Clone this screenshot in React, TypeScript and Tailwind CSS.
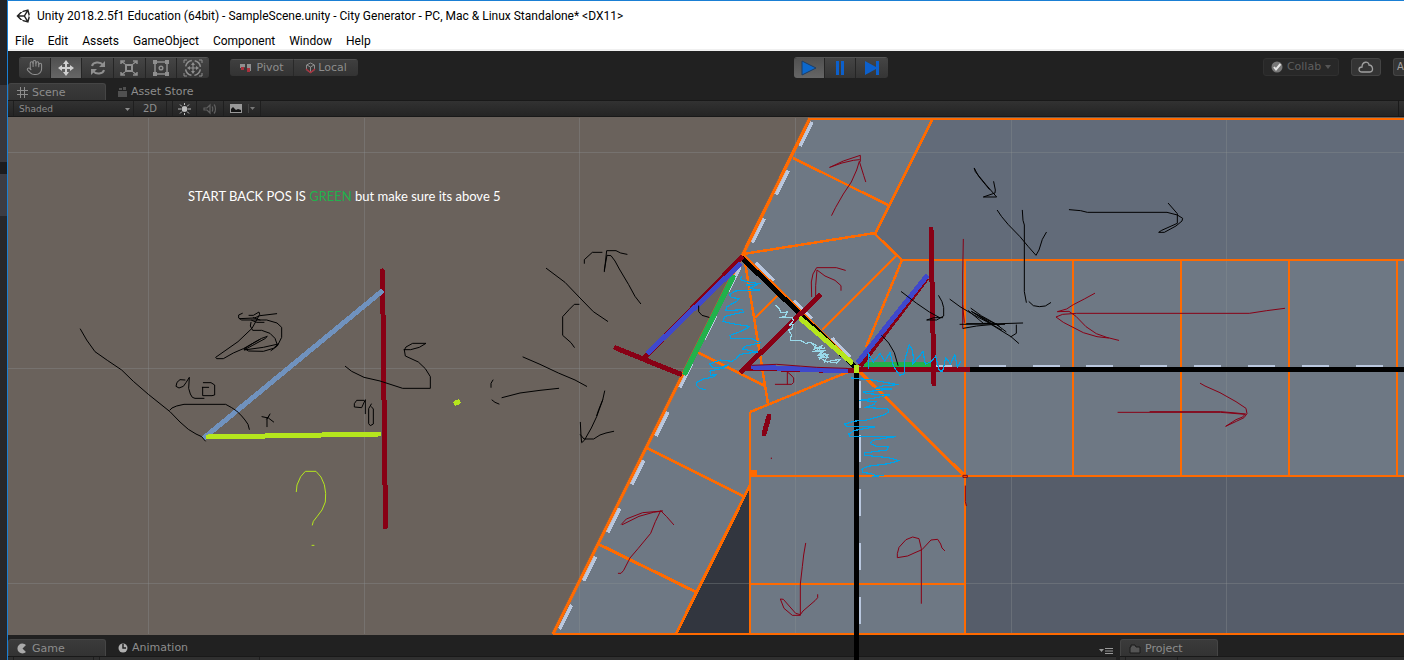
import type { ReactNode } from "react";
import { FaUnity } from "react-icons/fa";
import { Hand } from "lucide-react";

const RED = "#880015";
const CYAN = "#00a2e8";
const LIME = "#b5e61d";
const INDIGO = "#3f48cc";
const GREEN = "#22b14c";
const ORANGE = "#ff6a00";

const menus = ["File", "Edit", "Assets", "GameObject", "Component", "Window", "Help"];

/* Freehand strokes are written on a grid three times finer than the scene. */
function Ink({ x, y, color = "#000", width = 1, d }: { x: number; y: number; color?: string; width?: number; d: string }) {
  return (
    <path
      d={d}
      transform={`translate(${x} ${y}) scale(0.33333)`}
      stroke={color}
      strokeWidth={width * 3}
      fill="none"
      strokeLinecap="round"
      strokeLinejoin="round"
    />
  );
}

function Thick({ d, color }: { d: string; color: string }) {
  return <path d={d} stroke={color} strokeWidth={5} fill="none" strokeLinecap="round" />;
}

function SceneDrawing() {
  const major = [148.5, 364.5, 579.5, 795.5, 1011.5, 1226.5];
  const rows = [152.5, 368.5, 583.5];
  const laneMarks = Array.from({ length: 11 }, (_, k) => [812 - 24.05 * k, 122 + 48.3 * k]);
  return (
    <svg
      className="absolute inset-0 h-full w-full overflow-visible"
      viewBox="8 117 1396 518"
      preserveAspectRatio="xMinYMin slice"
      shapeRendering="crispEdges"
      aria-label="Scene view"
    >
      <rect x="8" y="117" width="1396" height="518" fill="#6a625c" />
      <path d="M810 118 H1404 V634 H553Z" fill="#6e7884" />
      <path d="M933 118 L875 234 L902 261 H1404 V118Z" fill="#626b79" />
      <path d="M965 476 H1404 V634 H965Z" fill="#565d6a" />
      <path d="M750 486 V634 H676Z" fill="#32363f" />
      <g stroke="#8c9193" strokeOpacity="0.35" fill="none">
        {major.map((x) => <path key={x} d={`M${x} 118V634`} />)}
        {rows.map((y) => <path key={y} d={`M8 ${y}H1404`} />)}
      </g>

      <g stroke="#b9c7de" strokeWidth="4" fill="none">
        {laneMarks.map(([x, y]) => <path key={x} d={`M${x} ${y}l-12 24`} />)}
        <path strokeWidth="3" d="M756 263l18 18M794 301l18 18M832 338l18 19" />
        <path strokeWidth="2" d="M925 366h27M979 366h27M1033 366h27M1086 366h27M1140 366h27M1194 366h27M1248 366h27M1302 366h27M1356 366h27" />
        <path strokeWidth="2" d="M860 381v27M860 435v27M860 489v27M860 543v27M860 597v27" />
      </g>

      <path d="M810 118L743 254L553 634" stroke={ORANGE} strokeWidth="4" strokeOpacity="0.35" fill="none" shapeRendering="auto" />
      <g stroke={ORANGE} strokeWidth="2" fill="none">
        <path strokeWidth="3" d="M810 118L743 254L553 634" />
        <path d="M810 119H1404M553 634H1404M902 260H1404" />
        <path d="M933 118L875 234L902 260" strokeWidth="2.500" />
        <path d="M793 158L888 205M743 254L875 233M897 255L822 330M778 295L755 318M902 260L866 347" strokeWidth="2.500" />
        <path d="M743 254L856 366M744 256L768 404M697 352L765 386M750 412L848 372" strokeWidth="2.500" />
        <path d="M647 448L743 496M598 544L696 592M860 372L965 476M750 485L676 634" strokeWidth="3" />
        <path d="M750 412V634M750 476H1404M750 584H965M965 260V634M1073 260V476M1181 260V476M1289 260V476M1397 260V476" />
      </g>
      <path d="M750 470h7v4l-3 3h-4z" fill={ORANGE} />

      <Thick color="#000" d="M743 259L855 367" />
      <path d="M856.500 368V660M965 369.500H1404" stroke="#000" strokeWidth="5" />
      <path d="M864 364H931" stroke={GREEN} strokeWidth="5" />
      <Thick color={RED} d="M741 258L646 356M616 348L680 374M819 296L742 371M931 229L934 384M769 416L764 434" />
      <path d="M743 368L856 371M859 369.500H970M927 278L860 366" stroke={RED} strokeWidth="5" />
      <Thick color={GREEN} d="M733 277L685 373" />
      <Thick color={INDIGO} d="M739 265L649 352M753 367L846 371M926 277L859 361" />
      <Thick color={LIME} d="M801 319L851 362M856.500 367V371" />

      <Thick color={RED} d="M382.500 271L385.500 527" />
      <Thick color="#7092be" d="M381 292L205 437" />
      <Thick color={LIME} d="M208 437L379 434M456 403L458 402" />

      <Ink x={60} y={260} d="M61 207L80 240L105 275L142 301L185 330L220 364L265 403L330 455L360 486L385 508L408 522L425 530L436 543" />
      <Ink x={60} y={260} d="M330 450L336 444L350 438L372 433H497L515 443L530 453L545 468L555 480L564 493L568 508" />
      <Ink x={60} y={260} d="M375 360L360 359L351 367L348 379L357 384L370 379L378 368L388 352L386 385L391 402L397 412L405 415L432 415M427 382H446M430 368H453L464 375V405L456 407H428V382" />
      <Ink x={60} y={260} d="M547 160L536 165V174L545 180H620L651 189L665 202V232L652 258L633 272M567 166H580L597 156L599 163L590 180L576 205L534 245L467 292L470 296H490L520 279L550 266L605 235L622 229L615 236L552 270L610 262L655 252L640 265L610 274L565 273L555 266M538 176L583 174L600 167L650 161M573 187L571 198L578 211H605L630 220L645 235L651 252M580 173L600 180M552 267L580 249L600 238M575 181L590 187H612" />
      <Ink x={60} y={260} d="M606 470L625 474L641 486M630 462L621 477V500M627 468L620 477" />
      <Ink x={60} y={260} d="M856 319L875 334L912 352L960 363L1028 385H1111V350L1096 326L1075 306L1036 288L1033 270L1038 261L1058 250H1098L1078 262L1052 269H1032" />
      <Ink x={60} y={260} d="M911 421H890L883 431V441L905 443L916 419V461M934 432L926 446V491L931 497L940 492V447L934 440" />
      <Ink x={60} y={260} color={LIME} d="M709 695L711 675L722 650L736 634H768L783 651L793 674L797 700L796 726L786 750L771 770L760 784L757 795M756 856H762" />

      <Ink x={540} y={115} d="M19 460L75 502L120 549L160 590L203 619M117 568H103L88 583L68 605V661L93 683L103 697M133 445V434L157 412H186M193 470L200 407H228L242 414L261 418M193 465L201 421L213 422L225 438L238 462L266 509L285 544L302 566" />
      <Ink x={540} y={115} d="M-51 726L0 748L55 774L105 795L140 814M-114 848L-60 834L0 826L56 820M-141 795L-147 805V817M-144 855L-135 862L-123 867M194 828L188 855L176 884L170 902" />
      <Ink x={540} y={115} d="M476 573V590L486 601L507 607" />
      <Ink x={480} y={400} d="M368 0L350 50L334 84L313 121L305 128L303 107L301 67M301 104L312 117H341L360 105L378 99L401 94" />

      <Ink x={730} y={115} color={RED} d="M305 301L317 277L340 237L364 201L380 165L388 139L401 181L407 200M299 157L336 144L370 136L388 134M302 156L340 138L391 121V139" />
      <Ink x={730} y={115} color={RED} d="M245 545L244 501L249 477L260 458H319L346 466M257 545V512L261 465L285 483L315 496L333 512V526" />
      <Ink x={730} y={115} color={RED} d="M700 373L698 480V640M698 571L703 622" />
      <Ink x={730} y={115} d="M733 160L746 184L778 223M514 530L560 565L598 591L629 608M626 542L636 560L641 578V603L620 615H590L612 608H638M455 661L476 684L493 713L504 751" />
      <Ink x={730} y={115} color="#99d9ea" width={1.2} d="M138 572L148 582L152 593L172 591L166 603L150 608L187 607L190 617L177 633L189 627L187 641L176 645L184 659L181 676H211L229 686L237 681L259 691L251 704L277 692L268 705L247 710L285 706L268 719L286 716L269 732L294 718L284 741L307 737L330 733L321 744L303 742" />
      <Ink x={730} y={115} color="#99d9ea" width={1.2} d="M246 687L262 702L285 699M271 707L294 727L267 727L292 741M272 711L264 722L284 724" />

      <Ink x={670} y={230} color={CYAN} width={1.2} d="M214 140L211 149L234 156L271 161L230 165L261 164L239 175L268 180L195 183L179 194L184 203L207 205L201 213L170 231L167 242L217 239L221 246L164 259L159 274L187 281L237 289L232 295L200 309L180 316L183 326H245L258 332L272 338L228 348L217 357L264 366L210 373L198 387L185 394L150 390L119 402L126 411L151 413L176 403L159 415L120 423L121 436L139 434L128 442L99 447L81 457L80 467L88 475L106 479" />
      <Ink x={680} y={350} color={CYAN} width={1.2} d="M514 84L570 89L605 95L655 104L610 107L586 115L635 117L551 126L560 131L630 135L562 148L538 151L589 155L581 164L555 172L624 177L626 186L610 196L556 211L526 213L494 222L500 229L584 231L525 241L506 252L509 259L645 260L577 271L571 281L588 289L626 290L620 300L552 309L555 316L625 323L657 332L626 341L563 349L546 357L548 367L573 371L590 377L577 380L610 376" />
      <Ink x={680} y={350} color={CYAN} width={1.2} d="M566 55V12L580 36L600 10L614 33L630 8L641 50L660 76L673 71V35L684 -4L688 -16L696 -2L700 20L698 43L713 24L729 5L736 42L754 35L767 18L778 62L788 64L797 24L812 42L824 13L832 52L842 34" />
      <Ink x={680} y={350} color={RED} d="M215 46L290 43L410 52L500 55M286 103H335L341 97V84L333 75L322 66V102M274 324V326M850 376H862V382H850ZM856 408V455L859 467" />

      <Ink x={960} y={150} d="M43 55L46 65L77 103L110 141H70L105 129L106 120L101 95M112 181L125 200L145 224L180 260L205 290L228 316L237 300L247 268L259 247M187 181L189 211L193 225V425L199 457M207 455L220 467L238 470L256 468L272 458" />
      <Ink x={960} y={150} d="M328 179L362 182L382 187H621L652 195L668 205L666 213L648 228L613 247H596L605 241L652 220V191L625 160" />
      <Ink x={960} y={150} d="M-30 448L0 470L40 494L80 515L153 560L176 580M0 523L90 522L188 519M10 535L50 528L92 524L134 523M33 475L65 498L105 520L138 545M25 482L70 520L94 520L34 484L100 526L125 540M45 490L119 529M20 521H110M169 525V550L153 560" />
      <Ink x={960} y={150} color={RED} d="M974 475L920 482L868 490H350L308 493L288 501L310 517L370 548L411 560L445 564M404 430L373 447L340 464L320 477L292 485L327 484L348 499L378 530L409 551L440 562L476 571" />
      <Ink x={960} y={150} color={RED} d="M474 787H570H782L855 793L848 801L828 809L797 829L829 814L852 803L861 791L858 775L828 755L780 728L735 708L721 700M570 785H782L828 789L857 792" />

      <Ink x={480} y={400} color={RED} d="M415 520H423L431 511L450 474L474 446L512 400L526 365L542 332L560 350L581 374M424 373L439 357L488 338L548 333L520 337L477 349L427 374" />
      <Ink x={480} y={400} color={RED} d="M977 430L971 465L967 500L961 552V646L937 646L912 625L901 597L910 598L947 640L961 644L969 633L1005 602L1013 593V584" />
      <Ink x={480} y={400} color={RED} d="M1324 610V446L1317 416L1298 411L1278 419L1257 442L1252 461V473L1283 468L1305 458L1326 449L1353 420L1373 418L1382 432L1386 444L1394 452" />
    </svg>
  );
}

const tabBase = "flex h-[17px] items-center gap-1 pl-2 pt-px font-['DejaVu_Sans'] text-[11px] leading-4 text-[#8d8d8d]";

function Tab({ active, icon, children }: { active?: boolean; icon: ReactNode; children: ReactNode }) {
  return (
    <button
      type="button"
      className={
        active
          ? `${tabBase} w-[98px] rounded-t-[3px] border border-b-0 border-[#454545] bg-linear-to-b from-[#3b3b3b] to-[#333333]`
          : `${tabBase}`
      }
    >
      {icon}
      <span>{children}</span>
    </button>
  );
}

function ToolButton({ label, active, children }: { label: string; active?: boolean; children: ReactNode }) {
  return (
    <button
      type="button"
      aria-label={label}
      className={`flex h-[20px] w-8 items-center justify-center border-r border-[#252525] last:border-r-0 text-[#8f8f8f] ${
        active ? "bg-linear-to-b from-[#505050] to-[#666666]" : "bg-linear-to-b from-[#454545] to-[#353535]"
      }`}
    >
      {children}
    </button>
  );
}

function Drawn({ children, w = 20, h = 18 }: { children: ReactNode; w?: number; h?: number }) {
  return (
    <svg width={w} height={h} viewBox={`0 0 ${w} ${h}`} fill="none" stroke="currentColor" strokeWidth="1.500" aria-hidden="true">
      {children}
    </svg>
  );
}

function TransformTools() {
  return (
    <div className="flex w-[190px] overflow-hidden rounded-[3px] border-t border-[#555555]">
      <ToolButton label="Hand tool"><Hand size={17} strokeWidth={1.5} /></ToolButton>
      <ToolButton label="Move tool" active>
        <Drawn>
          <g stroke="#d0d0d0" fill="#d0d0d0">
            <path d="M10 3V15M4 9H16" strokeWidth="2" />
            <path stroke="none" d="M10 1l3 4H7zM10 17l3-4H7zM2 9l4-3v6zM18 9l-4-3v6z" />
          </g>
        </Drawn>
      </ToolButton>
      <ToolButton label="Rotate tool">
        <Drawn>
          <path d="M4 7C5 3 12 2 15 6M16 11C15 15 8 16 5 12" strokeWidth="2" />
          <path d="M17 2v6h-6zM3 16v-6h6z" fill="currentColor" stroke="none" />
        </Drawn>
      </ToolButton>
      <ToolButton label="Scale tool">
        <Drawn>
          <path d="M7 6h6v6H7z" strokeWidth="2" />
          <path d="M2 5V2h4M14 2h4v3M18 13v3h-4M6 16H2v-3M2 2l4 3M18 2l-4 3M18 16l-4-3M2 16l4-3" />
        </Drawn>
      </ToolButton>
      <ToolButton label="Rect tool">
        <Drawn>
          <path d="M4 3h12v12H4z" />
          <path d="M2 1h4v4H2zM14 1h4v4h-4zM2 13h4v4H2zM14 13h4v4h-4z" fill="currentColor" stroke="none" />
          <circle cx="10" cy="9" r="1.800" />
        </Drawn>
      </ToolButton>
      <ToolButton label="Transform tool">
        <Drawn>
          <circle cx="10" cy="9" r="7.500" strokeDasharray="8.800 3" strokeDashoffset="-1.500" />
          <path d="M10 5v8M6 9h8" strokeWidth="1.200" />
          <path d="M10 3l2 3H8zM10 15l2-3H8zM4 9l3-2v4zM16 9l-3-2v4z" fill="currentColor" stroke="none" />
          <path d="M1 4V1h3M16 1h3v3M19 14v3h-3M4 17H1v-3" strokeWidth="1" />
        </Drawn>
      </ToolButton>
    </div>
  );
}

const smallButton =
  "flex h-[17px] items-center justify-center border-t border-[#4f4f4f] bg-linear-to-b from-[#3f3f3f] to-[#333333] font-['DejaVu_Sans'] text-[11px] leading-4 text-[#8d8d8d]";

function MainToolbar() {
  return (
    <div className="grid h-8 shrink-0 grid-cols-[3fr_auto_2fr] items-center overflow-hidden bg-[#212121] pl-[11px]">
      <div className="flex items-center gap-[21px]">
        <TransformTools />
        <div className="flex overflow-hidden rounded-[3px]">
          <button type="button" className={`${smallButton} w-[64px] gap-1 border-r border-r-[#292929]`}>
            <Drawn w={13} h={10}>
              <path d="M1 1h5v3l-2 1H1zM8 1h4v7H9V5H8z" fill="#8f8f8f" stroke="none" />
              <path d="M2 4h3v3H2zM8 5h3v4H8z" fill="#a9303c" stroke="none" />
            </Drawn>
            Pivot
          </button>
          <button type="button" className={`${smallButton} w-[64px] gap-[2px]`}>
            <Drawn w={11} h={12}>
              <path d="M5.500 1l4 2v5l-4 2.500-4-2.500V3zM2 3l3.500 2L9 3M5.500 5v5" strokeWidth="1" />
              <path d="M1 7l4.500 3.500L10 7" stroke="#a9303c" strokeWidth="1.500" />
            </Drawn>
            Local
          </button>
        </div>
      </div>
      <div className="flex w-[94px] overflow-hidden rounded-[3px] border-t border-[#555555]">
        <ToolButton label="Play" active>
          <Drawn><path d="M3 2v14l14-7z" fill="#0c68cc" stroke="#1d3d63" strokeWidth="1" /></Drawn>
        </ToolButton>
        <ToolButton label="Pause">
          <Drawn><path d="M6 2h3v14H6zM11 2h3v14h-3z" fill="#0c60cc" stroke="none" /></Drawn>
        </ToolButton>
        <ToolButton label="Step">
          <Drawn><path d="M3 2l11 6V2h3v14h-3v-6L3 16z" fill="#0c60cc" stroke="none" /></Drawn>
        </ToolButton>
      </div>
      <div className="flex justify-end gap-3">
        <button type="button" className="flex h-[18px] w-[76px] items-center justify-center gap-1 rounded-[3px] border border-[#303030] bg-[#282828] font-['DejaVu_Sans'] text-[11px] leading-4 text-[#5f5f5f]">
          <Drawn w={12} h={12}>
            <circle cx="6" cy="6" r="5.500" fill="#777" stroke="none" />
            <path d="M3 6l2 2.500L9.500 3" stroke="#e4e4e4" strokeWidth="2" />
          </Drawn>
          Collab
          <Drawn w={6} h={4}><path d="M0 0h6L3 4z" fill="#555" stroke="none" /></Drawn>
        </button>
        <button type="button" aria-label="Services" className="flex h-[18px] w-[30px] items-center justify-center rounded-[3px] border border-[#444444] bg-[#343434] text-[#a0a0a0]">
          <Drawn w={16} h={12}><path d="M4 11C0 11 0 6 4 6C4 0 11 0 11 4C15 4 16 11 12 11z" strokeWidth="1.300" /></Drawn>
        </button>
        <button type="button" aria-label="Account" className="h-[18px] w-[11px] rounded-l-[3px] border border-r-0 border-[#444444] bg-[#343434] pl-[3px] text-left font-['DejaVu_Sans'] text-[10px] leading-4 text-[#a0a0a0]">
          A
        </button>
      </div>
    </div>
  );
}

const cell = "flex h-full items-center justify-center border-r border-[#1f1f1f]";

function SceneToolbar() {
  return (
    <div className="flex h-[17px] shrink-0 items-center border-y border-[#191919] bg-linear-to-b from-[#323232] to-[#242424] pl-[5px] font-['DejaVu_Sans'] text-[#8d8d8d]">
      <label className="relative flex h-full w-[121px] items-center border-x border-[#1f1f1f]">
        <select aria-label="Draw mode" className="w-full appearance-none bg-transparent pl-[5px] text-[9px] leading-4 outline-none">
          <option>Shaded</option>
        </select>
        <span className="pointer-events-none absolute right-[3px] top-[7px]">
          <Drawn w={5} h={3}><path d="M0 0h5L2.500 3z" fill="currentColor" stroke="none" /></Drawn>
        </span>
      </label>
      <button type="button" className={`${cell} w-[33px] text-[10px]`}>2D</button>
      <span className={`${cell} w-[6px]`} />
      <button type="button" aria-label="Lighting" className={`${cell} w-[24px]`}>
        <Drawn w={13} h={12}>
          <g stroke="#bdbdbd" strokeWidth="1">
            <circle cx="6.500" cy="6" r="2.500" fill="#bdbdbd" />
            <path d="M6.500 0v2M6.500 10v2M0 6h3M10 6h3M2 1.500l2 2M9 8.500l2 2M11 1.500l-2 2M4 8.500l-2 2" />
          </g>
        </Drawn>
      </button>
      <button type="button" aria-label="Audio" className={`${cell} w-[27px] text-[#5f5f5f]`}>
        <Drawn w={14} h={12}>
          <path d="M1 5h3l3-3v8L4 7H1zM9 3.500c1 1 1 4 0 5M11 1.500c2 2 2 7 0 9" strokeWidth="1.200" />
        </Drawn>
      </button>
      <button type="button" aria-label="Effects" className={`${cell} w-[37px] gap-[6px]`}>
        <Drawn w={12} h={9}>
          <path d="M0 0h12v9H0z" fill="#999" stroke="none" />
          <path d="M1 8V5l2-2 3 3 2-1 3 1v2z" fill="#151515" stroke="none" />
        </Drawn>
        <Drawn w={7} h={9}><path d="M.5 0v9" stroke="#444" strokeWidth="1" /><path d="M2 3h5L4.500 6z" fill="#777" stroke="none" /></Drawn>
      </button>
      <span className="mr-[5px] ml-auto h-full border-r border-[#1a1a1a]" />
    </div>
  );
}

export default function App() {
  return (
    <div className="flex h-screen overflow-hidden bg-[#212121]">
      <div className="flex w-[7px] shrink-0 flex-col">
        <div className="h-[85px] bg-[#232326]" />
        <div className="h-[77px] bg-[#37373d]" />
        <div className="h-[12px] bg-[#1c1c1e]" />
        <div className="h-[42px] bg-[#3c3c43]" />
        <div className="flex-1 bg-[#27272a]" />
      </div>
      <div className="flex min-w-0 flex-1 flex-col border-t border-l border-[#1a7fd4]">
        <header className="h-[50px] shrink-0 border-b-2 border-[#f0f0f0] bg-white font-[Roboto,sans-serif] text-[12px] leading-4 text-black">
          <div className="flex h-[30px] items-center gap-[5px] pl-2">
            <FaUnity size={16} className="text-[#222222]" />
            <h1>Unity 2018.2.5f1 Education (64bit) - SampleScene.unity - City Generator - PC, Mac &amp; Linux Standalone* &lt;DX11&gt;</h1>
          </div>
          <nav className="flex gap-[14px] pt-[2px] pl-[7px]">
            {menus.map((m) => <button type="button" key={m}>{m}</button>)}
          </nav>
        </header>

        <MainToolbar />

        <div className="flex h-[17px] shrink-0 items-end gap-1">
          <Tab active icon={<Drawn w={11} h={11}><path d="M3.500 0v11M7.500 0v11M0 3.500h11M0 7.500h11" strokeWidth="1" /></Drawn>}>Scene</Tab>
          <Tab icon={<Drawn w={9} h={10}><path d="M0 4h9v6H0zM1 1h3v2H1zM5 0h3v3H5z" fill="#505050" stroke="none" /></Drawn>}>Asset Store</Tab>
        </div>
        <SceneToolbar />

        <main className="relative z-10 min-h-0 flex-1">
          <SceneDrawing />
          <p className="absolute top-[69px] left-[180px] font-[Lato,sans-serif] text-[13px] leading-5 text-white">
            START BACK POS IS <span className="text-[#22b14c]">GREEN</span> but make sure its above 5
          </p>
        </main>

        <footer className="shrink-0 bg-[#212121] pt-1">
          <div className="flex">
            <div className="flex flex-1 items-end gap-1">
              <Tab active icon={<Drawn w={11} h={11}><path d="M9 2A5 5 0 1 0 9 9L5.500 5.500z" fill="#aaa" stroke="none" /></Drawn>}>Game</Tab>
              <Tab icon={<Drawn w={10} h={10}><circle cx="5" cy="5" r="4.500" fill="#b0b0b0" stroke="none" /><path d="M5 1v4h3" stroke="#222" strokeWidth="1.500" /></Drawn>}>Animation</Tab>
              <button type="button" aria-label="Panel menu" className="mr-[7px] ml-auto pb-[2px] text-[#999999]">
                <Drawn w={14} h={6}><path d="M0 1h5L2.500 4z" fill="currentColor" stroke="none" /><path d="M6 .5h8M6 3h8M6 5.500h8" strokeWidth="1" /></Drawn>
              </button>
            </div>
            <div className="w-[284px]">
              <Tab active icon={<Drawn w={12} h={10}><path d="M1 3h1V1h4l1 2h4v6H1z" fill="#555" stroke="#1a1a1a" strokeWidth="1" /></Drawn>}>Project</Tab>
            </div>
          </div>
          <div className="flex h-1 gap-1">
            <div className="flex flex-1 border-t border-[#191919] bg-[#303030] px-[5px]">
              <span className="w-[81px] border-x border-[#1f1f1f]" />
              <span className="ml-[5px] w-[161px] border-x border-[#1f1f1f]" />
            </div>
            <div className="flex w-[284px] border-t border-[#191919] bg-[#303030] pl-[5px]">
              <span className="w-[53px] border-x border-[#1f1f1f]" />
            </div>
          </div>
        </footer>
      </div>
    </div>
  );
}
